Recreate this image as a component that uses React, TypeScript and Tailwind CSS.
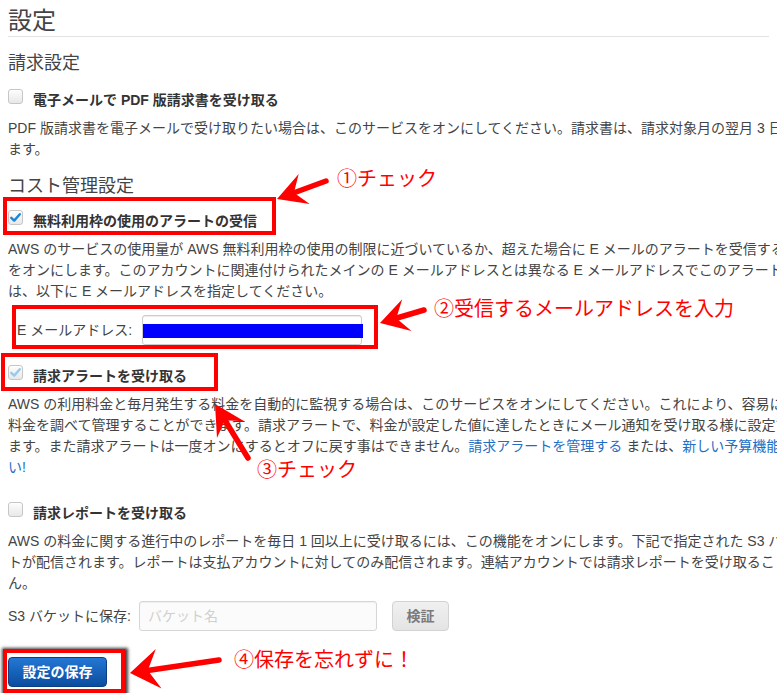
import React from "react";

type CbState = "off" | "on" | "dis";

function CheckBox({ state }: { state: CbState }) {
  return (
    <span className="mt-[-1px] flex h-[15px] w-[15px] shrink-0 items-center justify-center rounded-[3px] border border-[#c6c6c6] bg-linear-to-b from-[#fdfdfd] to-[#e8e8e8] shadow-[inset_0_1px_0_rgba(255,255,255,0.8)]">
      {state !== "off" && (
        <svg width="13" height="13" viewBox="0 0 13 13">
          <path
            d="M2.3 6.8 L5.2 9.6 L10.8 3.2"
            fill="none"
            stroke={state === "on" ? "#1a86d9" : "#96cbef"}
            strokeWidth="2.4"
            strokeLinecap="round"
            strokeLinejoin="round"
          />
        </svg>
      )}
    </span>
  );
}

function CheckRow({ state, label }: { state: CbState; label: string }) {
  return (
    <div className="flex h-[20px] items-start gap-[10px]">
      <CheckBox state={state} />
      <span className="text-[14px] leading-[20px] font-bold text-[#333]">{label}</span>
    </div>
  );
}

function arrow(tx: number, ty: number, px: number, py: number, L: number, W: number, notch: number) {
  const dx = px - tx;
  const dy = py - ty;
  const len = Math.hypot(dx, dy);
  const ux = dx / len;
  const uy = dy / len;
  const nx = -uy;
  const ny = ux;
  const bx = px - ux * L;
  const by = py - uy * L;
  const b1 = [bx + nx * W, by + ny * W];
  const b2 = [bx - nx * W, by - ny * W];
  const nt = [px - ux * (L - notch), py - uy * (L - notch)];
  return { shaft: [tx, ty, nt[0] + ux * 2, nt[1] + uy * 2], head: `${px},${py} ${b1[0]},${b1[1]} ${nt[0]},${nt[1]} ${b2[0]},${b2[1]}` };
}

const arrows = [
  arrow(326, 181, 277, 199, 29, 16, 11),
  arrow(424, 310, 380, 323, 28, 16.5, 11),
  arrow(248, 458, 215, 404, 30, 16, 11),
  arrow(219, 660, 130, 673, 29, 20, 11),
];

const link = "text-[#1f6fc5]";

export default function App() {
  return (
    <div className="relative h-[693px] w-[777px] overflow-hidden bg-white font-['Liberation_Sans','Noto_Sans_CJK_JP',sans-serif] text-[#444]">
      <div className="px-2">
        <h1 className="border-b border-[#e3e3e3] pt-[5px] text-[24px] leading-[31px] font-normal text-[#444]">設定</h1>
        <h2 className="mt-[14px] text-[18px] leading-[24px] font-normal">請求設定</h2>
        <div className="mt-[15px]">
          <CheckRow state="off" label="電子メールで PDF 版請求書を受け取る" />
        </div>
        <div className="mt-2 text-[14px] leading-[21px] whitespace-nowrap">
          <div>PDF 版請求書を電子メールで受け取りたい場合は、このサービスをオンにしてください。請求書は、請求対象月の翌月 3 日までに送信されます。</div>
          <div>ます。</div>
        </div>
        <h2 className="mt-[14px] text-[18px] leading-[24px] font-normal">コスト管理設定</h2>
        <div className="mt-[13px]">
          <CheckRow state="on" label="無料利用枠の使用のアラートの受信" />
        </div>
        <div className="mt-2 text-[14px] leading-[21px] whitespace-nowrap">
          <div>AWS のサービスの使用量が AWS 無料利用枠の使用の制限に近づいているか、超えた場合に E メールのアラートを受信するには、この機能</div>
          <div>をオンにします。このアカウントに関連付けられたメインの E メールアドレスとは異なる E メールアドレスでこのアラートを受信するに</div>
          <div>は、以下に E メールアドレスを指定してください。</div>
        </div>
        <div className="mt-[13px] flex h-[30px] items-center pl-[9px]">
          <span className="w-[125px] shrink-0 text-[14px] whitespace-nowrap">E メールアドレス:</span>
          <div className="relative h-[30px] w-[220px] rounded-[3px] border border-[#cccccc] bg-white shadow-[inset_0_1px_1px_rgba(0,0,0,0.075)]">
            <div className="absolute top-[8px] right-[-2px] left-0 h-[14px] bg-[#0000ff]" />
          </div>
        </div>
        <div className="mt-[21px]">
          <CheckRow state="dis" label="請求アラートを受け取る" />
        </div>
        <div className="mt-2 text-[14px] leading-[21px] whitespace-nowrap">
          <div>AWS の利用料金と毎月発生する料金を自動的に監視する場合は、このサービスをオンにしてください。これにより、容易に AWS の</div>
          <div>料金を調べて管理することができます。請求アラートで、料金が設定した値に達したときにメール通知を受け取る様に設定できます</div>
          <div>
            ます。また請求アラートは一度オンにするとオフに戻す事はできません。<span className={link}>請求アラートを管理する</span> または、
            <span className={link}>新しい予算機能をお試しくださ</span>
          </div>
          <div className={link}>い!</div>
        </div>
        <div className="mt-[25px]">
          <CheckRow state="off" label="請求レポートを受け取る" />
        </div>
        <div className="mt-2 text-[14px] leading-[21px] whitespace-nowrap">
          <div>AWS の料金に関する進行中のレポートを毎日 1 回以上に受け取るには、この機能をオンにします。下記で指定された S3 バケットにレポー</div>
          <div>トが配信されます。レポートは支払アカウントに対してのみ配信されます。連結アカウントでは請求レポートを受け取ることはできませ</div>
          <div>ん。</div>
        </div>
        <div className="mt-[7px] flex h-[30px] items-center">
          <span className="w-[131px] shrink-0 text-[14px] whitespace-nowrap">S3 バケットに保存:</span>
          <div className="flex h-[30px] w-[238px] items-center rounded-[3px] border border-[#d6d6d6] bg-[#fbfbfb] px-[8px] text-[14px] text-[#d0d0d0] shadow-[inset_0_1px_1px_rgba(0,0,0,0.05)]">
            バケット名
          </div>
          <div className="ml-[15px] flex h-[30px] w-[57px] items-center justify-center rounded-[4px] border border-[#d2d2d2] bg-linear-to-b from-[#f0f0f0] to-[#e4e4e4] text-[14px] font-bold text-[#7a7a7a]">
            検証
          </div>
        </div>
        <div className="mt-[26px] flex">
          <div className="flex h-[30px] w-[99px] items-center justify-center rounded-[4px] border border-[#0a3f86] bg-linear-to-b from-[#2477d4] to-[#0a4d9f] text-[14px] font-bold text-white">
            設定の保存
          </div>
        </div>
      </div>

      {/* annotations */}
      <div className="absolute top-[197px] left-[3px] h-[38px] w-[273px] border-4 border-[#ff0000]" />
      <div className="absolute top-[305px] left-[12px] h-[44px] w-[366px] border-4 border-[#ff0000]" />
      <div className="absolute top-[353px] left-[1px] h-[38px] w-[217px] border-4 border-[#ff0000]" />
      <div className="absolute top-[649px] left-[3px] h-[44px] w-[122px] border-4 border-[#ff0000] shadow-[1px_1px_3px_2px_rgba(0,0,0,0.75)]" />

      <svg className="pointer-events-none absolute inset-0" width="777" height="693">
        {arrows.map((a, i) => (
          <g key={i}>
            <line x1={a.shaft[0]} y1={a.shaft[1]} x2={a.shaft[2]} y2={a.shaft[3]} stroke="#ff0000" strokeWidth="5.5" strokeLinecap="round" />
            <polygon points={a.head} fill="#ff0000" />
          </g>
        ))}
      </svg>

      <div className="absolute top-[168px] left-[337px] font-['Noto_Sans_CJK_JP',sans-serif] text-[20px] leading-[20px] whitespace-nowrap text-[#ff0000]">①チェック</div>
      <div className="absolute top-[298px] left-[434px] font-['Noto_Sans_CJK_JP',sans-serif] text-[20px] leading-[20px] whitespace-nowrap text-[#ff0000]">②受信するメールアドレスを入力</div>
      <div className="absolute top-[459px] left-[257px] font-['Noto_Sans_CJK_JP',sans-serif] text-[20px] leading-[20px] whitespace-nowrap text-[#ff0000]">③チェック</div>
      <div className="absolute top-[649px] left-[234px] font-['Noto_Sans_CJK_JP',sans-serif] text-[20px] leading-[20px] whitespace-nowrap text-[#ff0000]">④保存を忘れずに！</div>
    </div>
  );
}
